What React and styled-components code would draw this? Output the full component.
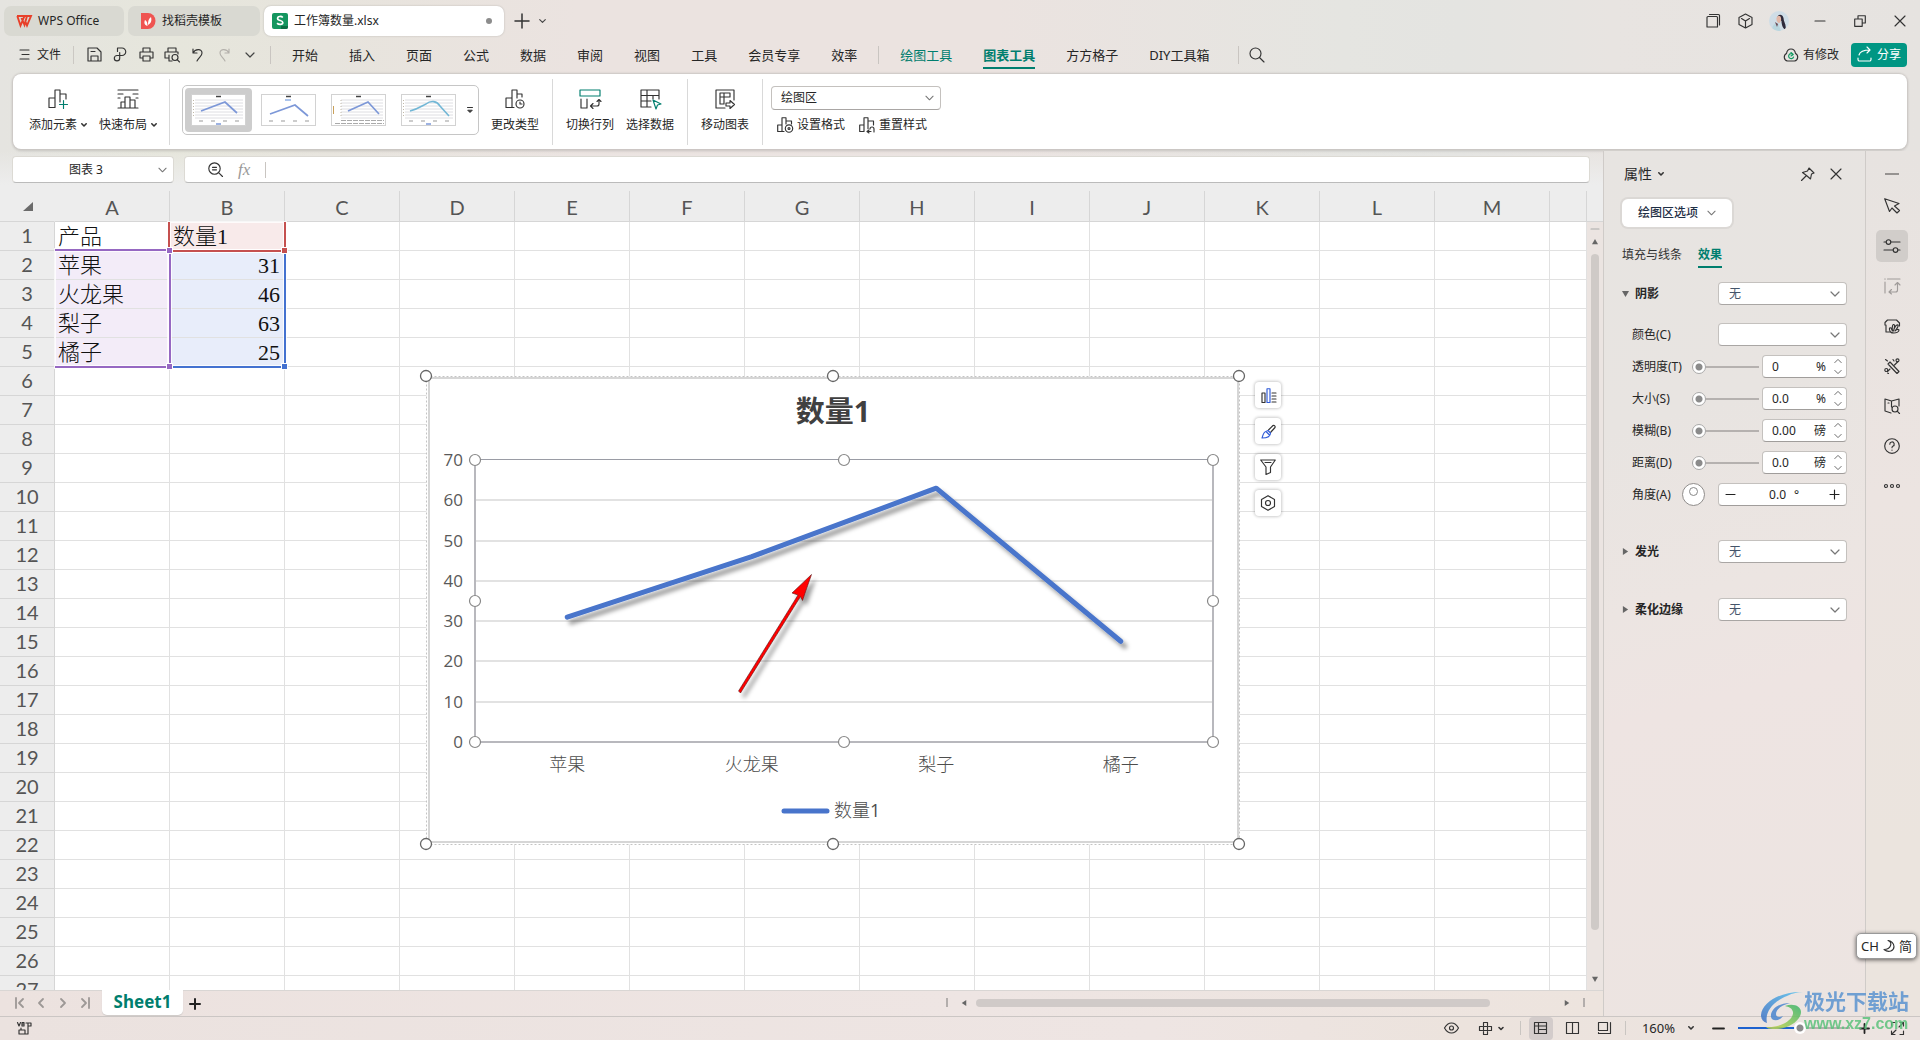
import React from "react";
import styled, { createGlobalStyle, css } from "styled-components";

const UI = `"Noto Sans", "Noto Sans CJK SC", sans-serif`;
const GREEN = "#007e6e";

const Global = createGlobalStyle`
  * { box-sizing: border-box; }
  html, body { margin: 0; height: 100%; overflow: hidden; }
  body { font: 12px/16px ${UI}; color: #262626; }
  button, input, select { font: inherit; color: inherit; margin: 0; padding: 0; border: 0; background: none; }
  svg { display: block; flex: none; overflow: visible; }
`;

/* ---------- icons ---------- */
const Svg = ({ w = 20, h, box, c = "#333", sw = 1.15, children }) => (
  <svg width={w} height={h || w} viewBox={box || `0 0 ${w} ${h || w}`} fill="none" stroke={c}
    strokeWidth={sw} strokeLinecap="round" strokeLinejoin="round" aria-hidden="true">{children}</svg>
);
const Chevron = ({ w = 10, c = "#777", sw = 1.2, up }) => (
  <Svg w={w} h={6} box="0 0 10 6" c={c} sw={sw}><path d={up ? "M1 5 5 1l4 4" : "M1 1l4 4 4-4"} /></Svg>
);
const Caret = () => <Svg w={6} h={4} c="#333" sw={1.6}><path d="M.8.8 3 3 5.2.8" /></Svg>;
const Tri = ({ d = "down", c = "#666", s = 8 }) => {
  const p = { down: "M0 1h8L4 8z", right: "M1 0v8l6-4z", left: "M7 0v8L1 4z", up: "M0 7h8L4 0z" }[d];
  return <svg width={s} height={s} viewBox="0 0 8 8" aria-hidden="true"><path d={p} fill={c} /></svg>;
};

/* ---------- frame ---------- */
const App_ = styled.div`
  height: 100vh; display: flex; flex-direction: column; position: relative;
  background: linear-gradient(90deg, #e5e4e0 0, #e6e6dc 9%, #e7e4dd 17%, #ebe3e0 30%, #ebe3e0 52%, #e5e5e1 70%, #e4e4e1 76%, #e8e4e1 84%, #e6e3e0 100%);
`;
const TitleBar = styled.header`
  display: flex; align-items: center; height: 37px; padding: 4px 7px 0 4px; gap: 4px; flex: none;
`;
const DocTab = styled.button`
  display: flex; align-items: center; gap: 6px; height: 30px; width: ${(p) => p.$w}px; padding: 0 12px;
  padding-left: ${(p) => (p.$on ? 8 : 12)}px;
  border-radius: 7px; background: ${(p) => (p.$on ? "#fff" : "#d9d9d2")};
  box-shadow: ${(p) => (p.$on ? "0 0 2px #b5b2ae" : "none")};
`;
const Dot = styled.i`width: 6px; height: 6px; border-radius: 50%; background: #8c8c8c; margin-left: auto;`;
const Spacer = styled.div`flex: ${(p) => (p.$w ? `0 0 ${p.$w}px` : 1)};`;
const IconBtn = styled.button`
  display: flex; align-items: center; justify-content: center; flex: none;
  width: ${(p) => p.$w || 26}px; height: ${(p) => p.$h || 26}px;
  border-radius: ${(p) => p.$r || 0}px; background: ${(p) => p.$bg || "none"};
`;
const Avatar = styled.span`
  width: 20px; height: 20px; border-radius: 50%; overflow: hidden; background: #cfdde6;
`;
const MenuBar = styled.nav`
  display: flex; align-items: center; height: 37px; padding: 0 13px 2px 16px; flex: none;
`;
const FileBtn = styled.button`
  display: flex; align-items: center; gap: 8px; height: 18px; padding: 0 12px 0 4px; border-right: 1px solid #cbc8c3;
`;
const Quick = styled.div`display: flex; padding: 0 7px 0 7px;`;
const Bar = styled.i`width: 1px; height: ${(p) => p.$h || 18}px; background: #c9c5c1; flex: none; margin: 0 ${(p) => p.$mr || 0}px 0 ${(p) => p.$ml || 0}px;`;
const Menus = styled.div`display: flex; align-items: center; gap: 31px; padding: 0 21px; font-size: 13px; line-height: 18px;`;
const MenuItem = styled.button`
  height: 28px; padding-top: 2px; border-bottom: 2px solid ${(p) => (p.$on ? GREEN : "transparent")};
  color: ${(p) => (p.$green ? GREEN : "#262626")}; font-weight: ${(p) => (p.$on ? 700 : 400)}; white-space: nowrap;
`;
const Changed = styled.span`display: flex; align-items: center; gap: 4px; margin-right: 12px;`;
const Share = styled.button`
  display: flex; align-items: center; gap: 5px; height: 24px; width: 56px; padding-left: 6px;
  background: #009683; color: #fff; border-radius: 4px; white-space: nowrap;
`;

/* ---------- ribbon ---------- */
const Ribbon = styled.section`
  display: flex; align-items: center; height: 75px; margin: 0 13px; flex: none; background: #fff;
  border-radius: 8px; box-shadow: 0 0 2px 1px #c9c5c2, 0 2px 3px rgba(0,0,0,.12);
`;
const Group = styled.div`
  display: flex; align-items: center; height: 66px; gap: 12px; padding: 0 ${(p) => p.$pr ?? 13}px 4px ${(p) => p.$pl ?? 13}px;
  border-right: ${(p) => (p.$last ? 0 : 1)}px solid #d9d9d9;
`;
const Tool = styled.button`
  display: flex; flex-direction: column; align-items: center; gap: 8px; white-space: nowrap; height: 46px; padding-top: 2px;
  & > span { display: flex; align-items: center; gap: 4px; }
`;
const Gallery = styled.div`
  display: flex; align-items: center; width: 297px; height: 50px; padding: 0 2px; gap: 3px;
  border: 1px solid #c6c6c6; border-radius: 5px;
`;
const Thumb = styled.button`
  width: 67px; height: 44px; padding: 6px; border-radius: 4px; background: ${(p) => (p.$on ? "#cdcdcd" : "#fff")};
`;
const Stack = styled.div`display: flex; flex-direction: column; gap: 6px;`;
const Row = styled.div`display: flex; align-items: center; gap: ${(p) => p.$g || 0}px;`;
const SmallTool = styled.button`display: flex; align-items: center; gap: 4px; height: 18px; white-space: nowrap; padding-left: 6px;`;

const SelectWrap = styled.span`
  position: relative; display: block; width: ${(p) => (p.$w ? p.$w + "px" : "100%")};
  & > svg { position: absolute; right: 7px; top: 50%; margin-top: -3px; pointer-events: none; }
`;
const Select = styled.select`
  appearance: none; display: block; width: 100%; height: ${(p) => p.$h || 23}px; padding: 0 24px 0 ${(p) => p.$pl || 10}px;
  background: #fff; border: 1px solid #c4c1be; border-radius: 4px; color: ${(p) => p.$c || "#262626"};
  border-bottom-color: #a9a6a4; ${(p) => p.$center && css`text-align: center; text-align-last: center; border-color: #dcdad4; border-bottom-color: #bbb;`}
`;

/* ---------- body ---------- */
const Body = styled.main`flex: 1; min-height: 0; display: flex; padding-top: 2px;`;
const Left = styled.div`flex: 1; min-width: 0; display: flex; flex-direction: column;`;
const FormulaRow = styled.div`
  display: flex; gap: 10px; height: 40px; padding: 5px 13px 8px 12px; flex: none;
  background: linear-gradient(180deg, rgba(237,237,237,0) 0, #ededed 85%);
`;
const FormulaBox = styled.label`
  display: flex; align-items: center; flex: 1; gap: 15px; padding-left: 23px; background: #fff; border-radius: 4px;
  border: 1px solid #dcdad4; border-bottom-color: #bbb; min-width: 0;
  & > input { flex: 1; outline: 0; min-width: 0; }
`;
const Fx = styled.i`font: italic 17px/20px "Liberation Serif", serif; color: #999;`;
const SheetRow = styled.div`flex: 1; min-height: 0; display: flex; background: #ededed;`;
const Sheet = styled.div`flex: 1; min-width: 0; position: relative; overflow: hidden; background: #fff;`;
const Grid = styled.table`
  table-layout: fixed; border-collapse: separate; border-spacing: 0; width: 100%; min-width: 1500px;
  th { background: #ededed; color: #555; font: 20px/24px Lato, sans-serif; padding: 0 0 2px; height: 29px; border-right: 1px solid #d6d6d6; border-bottom: 1px solid #d6d6d6; }
  thead th { height: 31px; padding: 1px 0 0; }
  thead th:first-child { border-right-color: #ededed; }
  td { height: 29px; padding: 2px 4px 0 3px; border-right: 1px solid #e1e1e1; border-bottom: 1px solid #e1e1e1; white-space: nowrap; overflow: hidden; }
`;
const Corner = styled.div`display: flex; justify-content: flex-end; padding-right: 21px;`;
const Cell = styled.td`
  font: 300 22px/26px "Liberation Serif", "Noto Sans CJK SC", serif; color: #111;
  text-align: ${(p) => (p.$num ? "right" : "left")};
  background: ${(p) => p.$bg || "#fff"};
`;
const Range = styled.div`
  position: absolute; left: ${(p) => p.$x}px; top: ${(p) => p.$y}px; width: ${(p) => p.$w}px; height: ${(p) => p.$h}px;
  border: 0 solid ${(p) => p.$c}; border-width: ${(p) => p.$b}; pointer-events: none;
  box-shadow: inset 0 0 0 1px rgba(255,255,255,.8), 0 0 0 1px rgba(255,255,255,.8);
`;
const Knob = styled.i`
  position: absolute; left: ${(p) => p.$x - 4}px; top: ${(p) => p.$y - 3}px; width: 7px; height: 7px;
  background: ${(p) => p.$c}; border: 1px solid #fff;
`;
const ChartLayer = styled.figure`position: absolute; left: 418px; top: 177px; margin: 0;`;
const ChartTools = styled.div`
  position: absolute; left: 1255px; top: 191px; display: flex; flex-direction: column; gap: 10px;
  button { background: #fff; border-radius: 4px; box-shadow: 0 0 3px 1px rgba(0,0,0,.2); }
`;
const VScroll = styled.div`
  width: 16px; flex: none; display: flex; flex-direction: column; align-items: center; gap: 9px;
  background: #ebe4e1; margin-top: 30px; padding: 6px 0 8px; border-top: 1px solid #d6d6d6;
  i { width: 8px; border-radius: 4px; background: #cfcac7; flex: 0 1 676px; margin-bottom: auto; }
`;
const TabRow = styled.div`
  display: flex; align-items: flex-start; height: 26px; flex: none; background: linear-gradient(90deg, #ece2df, #eee5e3 60%, #ede4de);
  border-top: 1px solid #d9d6d4; padding: 0 18px 0 8px;
`;
const TabNav = styled.div`display: flex; width: 94px; height: 23px; align-items: center;`;
const SheetTab = styled.button`
  height: 25px; margin-top: -1px; width: 81px; background: #fff; color: ${GREEN}; border-radius: 0 0 5px 5px; white-space: nowrap;
  font: 700 17px/22px "Noto Sans", sans-serif; padding-bottom: 2px; box-shadow: 0 1px 1px #cfcac8;
`;
const HScroll = styled.div`
  display: flex; align-items: center; flex: 0 0 639px; height: 23px; margin-left: auto;
  b { width: 514px; height: 8px; border-radius: 4px; background: #d0cac8; margin: 0 auto 0 9px; }
`;
const Tick = styled.i`width: 2px; height: 9px; background: #b3aeac; margin-right: ${(p) => p.$mr || 0}px; margin-left: ${(p) => p.$ml || 0}px;`;

/* ---------- properties panel ---------- */
const Panel = styled.aside`
  width: 262px; flex: none; border-left: 1px solid #cfcbc8; padding: 12px 18px 0 18px;
  background: linear-gradient(165deg, #e7e4e1 0, #e8e4e1 30%, #ece5e2 50%, #eee4e2 62%, #ece4e1 100%);
`;
const PanelHead = styled.div`display: flex; align-items: center; height: 22px; font-size: 14px; gap: 6px; padding-left: 2px;`;
const OptionBtn = styled.button`
  display: flex; align-items: center; justify-content: center; gap: 9px; width: 110px; height: 28px; margin-top: 14px;
  background: #fff; border-radius: 6px; font-weight: 500; color: #1f2f45; box-shadow: 0 0 0 2px #dbd8d5; white-space: nowrap;
`;
const PanelTabs = styled.div`display: flex; gap: 16px; margin: 17px 0 14px;`;
const PanelTab = styled.button`
  height: 24px; color: ${(p) => (p.$on ? GREEN : "#333")}; font-weight: ${(p) => (p.$on ? 700 : 400)};
  border-bottom: 2px solid ${(p) => (p.$on ? GREEN : "transparent")}; white-space: nowrap;
`;
const Section = styled.div`
  display: grid; grid-template-columns: 96px 1fr; align-items: center; margin-bottom: ${(p) => p.$mb}px; height: 23px;
`;
const SectionName = styled.label`display: flex; align-items: center; gap: 6px; font-weight: 700;`;
const Prop = styled.div`
  display: grid; grid-template-columns: 57px 67px 1fr; column-gap: 3px; align-items: center; height: 23px; margin-bottom: 9px; padding-left: 10px;
  label { white-space: nowrap; }
`;
const PropWide = styled(Prop)`grid-template-columns: 50px 23px 1fr; column-gap: 0; & > :nth-child(3) { margin-left: 13px; }`;
const ColorRow = styled(Section)`label { padding-left: 10px; }`;
const Slider = styled.input`
  appearance: none; width: 67px; height: 16px; background: linear-gradient(#b5b1af, #b5b1af) center / 100% 2px no-repeat;
  &::-webkit-slider-thumb { appearance: none; width: 14px; height: 14px; border-radius: 50%; background: radial-gradient(#8b8b8b 0 3px, #fff 4px); border: 1px solid #aaa; }
`;
const Spin = styled.div`
  display: flex; align-items: center; height: 23px; min-width: 0; background: #fff; border: 1px solid #c4c1be; border-bottom-color: #a09d9b; border-radius: 4px; padding: 0 4px 0 9px;
  input { flex: 1; width: 40px; min-width: 0; font-size: 12px; outline: 0; }
  > span { margin-right: 8px; }
  div { display: flex; flex-direction: column; gap: 1px; }
  div button { display: flex; width: 8px; height: 10px; align-items: center; justify-content: center; }
`;
const AngleBox = styled(Spin)`
  padding: 0 7px; input { flex: 0 0 51px; text-align: right; } > span { margin: 0; padding-left: 8px; flex: 1; }
`;
const Dial = styled.button`
  width: 23px; height: 23px; border-radius: 50%; background: #fff; border: 1px solid #8f8c8a; display: flex; justify-content: center; padding-top: 3px;
  i { width: 9px; height: 9px; border-radius: 50%; border: 1px solid #888; }
`;
const Rail = styled.aside`
  width: 55px; flex: none; border-left: 1px solid #cfcbc8; display: flex; flex-direction: column; align-items: center; gap: 8px; padding: 39px 2px 0 0;
  position: relative;
  background: linear-gradient(180deg, #e7e3e0, #ece4e1 40%, #ebe4de 80%);
  &::before { content: ""; position: absolute; top: 22px; width: 14px; height: 2px; background: #969391; }
`;

/* ---------- status bar ---------- */
const Status = styled.footer`
  display: flex; align-items: center; height: 24px; flex: none; border-top: 1px solid #cbc6c4; padding: 0 10px 1px 12px;
  background: linear-gradient(90deg, #ebe2df, #eee5e3 60%, #ece3dd 76%, #ece4e1);
`;
const Zoom = styled.button`display: flex; align-items: center; gap: 13px; height: 22px; padding: 0 12px 0 16px; font-size: 13px;`;
const ZoomSlider = styled.input`
  appearance: none; width: 112px; height: 14px; margin: 0 8px;
  background: linear-gradient(90deg, #1d62cf 0 56%, #b5b0ae 56%) center / 100% 2px no-repeat;
  &::-webkit-slider-thumb { appearance: none; width: 12px; height: 12px; border-radius: 50%; background: radial-gradient(#8b8b8b 0 3px, #fff 4px); }
`;
const Ime = styled.div`
  position: absolute; right: 3px; bottom: 81px; width: 61px; height: 26px; background: #fff; border: 1px solid #999; border-radius: 5px;
  display: flex; align-items: center; justify-content: center; gap: 4px; font-size: 13px; box-shadow: 0 1px 4px rgba(0,0,0,.6);
`;
const Watermark = styled.div`
  position: absolute; right: 11px; bottom: 7px; display: flex; align-items: center; gap: 1px; pointer-events: none; opacity: .85;
`;
const WmText = styled.div`
  display: flex; flex-direction: column; font-family: "Noto Sans CJK SC", sans-serif;
  b { font-size: 21px; line-height: 25px; margin-bottom: 2px; color: #5b93d0; white-space: nowrap; }
  span { font: 700 16px/18px "Liberation Sans", sans-serif; color: #5cc27c; white-space: nowrap; }
`;

/* ---------- data ---------- */
const DATA = [["苹果", 31], ["火龙果", 46], ["梨子", 63], ["橘子", 25]];
const COLS = "ABCDEFGHIJKLM".split("");
const MENUS = ["开始", "插入", "页面", "公式", "数据", "审阅", "视图", "工具", "会员专享", "效率"];

function Miniature({ kind }) {
  const curve = kind === 3;
  return (
    <svg width="55" height="32" viewBox="0 0 55 32" aria-hidden="true">
      <rect x=".5" y=".5" width="54" height="31" fill="#fff" stroke="#d2d2d2" />
      <path d="M25 2.5h5" stroke="#444" strokeWidth="1.5" />
      {kind !== 1 && [6, 9, 12, 15, 18, 21, 24].map((y) => <path key={y} d={`M${kind === 2 ? 10 : 4} ${y}H52`} stroke="#dedee2" />)}
      {kind !== 1 && <path d={`M${kind === 2 ? 10 : 2.5} 6v18`} stroke="#c0b8a8" strokeDasharray="1 2" />}
      {kind === 1 && <path d="M24 6h6" stroke="#8fb0e6" strokeWidth="1.5" />}
      {kind === 2 && <><path d="M2.5 12v8" stroke="#caa15a" /><path d="M10 26.5h43M4 29.5h49" stroke="#aaa" strokeDasharray="5 1" /></>}
      {curve
        ? <path d="M9 17c8-2 12-5 16-7 5-4 11-3 14 2l9 10" fill="none" stroke="#72b7d6" strokeWidth="1.6" />
        : <path d={kind === 1 ? "M9 20 34 11 47 22" : kind === 2 ? "M17 17 37 8 48 20" : "M10 17 34 8 46 19"} fill="none" stroke="#7d98d8" strokeWidth="1.7" />}
      {kind !== 2 && <path d="M8 27h4m8 0h4m8 0h4m8 0h4" stroke="#999" />}
      {kind !== 1 && kind !== 2 && <path d="M25 30h5" stroke="#7d98d8" strokeWidth="1.5" />}
    </svg>
  );
}

function Chart() {
  const x0 = 475, x1 = 1213, y0 = 742, y1 = 460;
  const py = (v) => y0 - (v * (y0 - y1)) / 70;
  const px = (i) => x0 + ((i + 0.5) * (x1 - x0)) / 4;
  const pts = DATA.map((d, i) => `${px(i)},${py(d[1])}`).join(" ");
  const xs = [426, 833, 1239], ys = [376, 844];
  const cjk = `"Noto Sans CJK SC", sans-serif`;
  return (
    <svg width="832" height="486" viewBox="418 368 832 486" role="img" aria-label="数量1">
      <defs>
        <filter id="soft" x="-10%" y="-10%" width="120%" height="130%"><feDropShadow dx="4" dy="5" stdDeviation="2" floodColor="#000" floodOpacity=".38" /></filter>
      </defs>
      <rect x="426.5" y="376.5" width="813" height="468" fill="#fff" stroke="#c4c4c4" strokeDasharray="2 2" />
      <rect x="429" y="378" width="809" height="464" fill="#fff" stroke="#d6d6d6" strokeWidth="2" />
      <text x="833" y="422" textAnchor="middle" fontFamily={`"Open Sans", ${cjk}`} fontSize="29" fontWeight="700" fill="#404040">数量1</text>
      {[0, 10, 20, 30, 40, 50, 60, 70].map((v) => (
        <g key={v}>
          {v > 0 && v < 70 && <path d={`M${x0} ${Math.round(py(v))}H${x1}`} stroke="#e2e2e2" strokeWidth="2" />}
          <text x="463" y={Math.round(py(v)) + 6} textAnchor="end" fontFamily={`"Open Sans", sans-serif`} fontSize="17" fill="#595959">{v}</text>
        </g>
      ))}
      <path d={`M${x0} ${y1}V${y0}H${x1}V${y1}`} fill="none" stroke="#b8b8bd" strokeWidth="2" />
      <path d={`M${x0} ${y1 - 0.5}H${x1}`} stroke="#9a9ca5" />
      <g filter="url(#soft)"><polyline points={pts} fill="none" stroke="#4874cb" strokeWidth="5" strokeLinecap="round" strokeLinejoin="round" /></g>
      <g filter="url(#soft)"><path d="M738.5 691 798 595 792 593 811.5 574.5 802.5 600.5 800.5 596.5 740.5 693z" fill="#ff0000" stroke="#5a1a1a" strokeWidth=".6" /></g>
      {DATA.map((d, i) => (
        <text key={d[0]} x={px(i)} y="771" textAnchor="middle" fontFamily={cjk} fontWeight="300" fontSize="18" fill="#4d4d4d">{d[0]}</text>
      ))}
      <path d="M784 811h43" stroke="#4874cb" strokeWidth="5" strokeLinecap="round" />
      <text x="834" y="817" fontFamily={`"Open Sans", ${cjk}`} fontWeight="300" fontSize="18" fill="#4d4d4d">数量<tspan fontWeight="400">1</tspan></text>
      <g fill="#fff" stroke="#666" strokeWidth="1.3">
        {xs.flatMap((x) => ys.map((y) => <circle key={`${x}-${y}`} cx={x} cy={y} r="5.5" />))}
      </g>
      <g fill="#fff" stroke="#888" strokeWidth="1.2">
        {[x0, 844, x1].flatMap((x) => [y1, 601, y0].filter((y) => !(x === 844 && y === 601)).map((y) => <circle key={`${x}-${y}`} cx={x} cy={y} r="5.5" />))}
      </g>
    </svg>
  );
}

function SpinRow({ id, label, value, unit }) {
  return (
    <Prop>
      <label htmlFor={id}>{label}</label>
      <Slider type="range" defaultValue="0" aria-label={label} />
      <Spin>
        <input id={id} defaultValue={value} />
        <span>{unit}</span>
        <div>
          <button aria-label="增加"><Chevron w={8} c="#666" up /></button>
          <button aria-label="减少"><Chevron w={8} c="#666" /></button>
        </div>
      </Spin>
    </Prop>
  );
}

function EffectSection({ id, name, open, mb }) {
  return (
    <Section $mb={mb}>
      <SectionName htmlFor={id}><Tri s={7} d={open ? "down" : "right"} />{name}</SectionName>
      <SelectWrap><Select id={id} $c="#44546a"><option>无</option></Select><Chevron /></SelectWrap>
    </Section>
  );
}

export default function App() {
  return (
    <App_>
      <Global />
      <TitleBar>
        <DocTab $w={120}>
          <svg width="16" height="12" viewBox="0 0 16 12" fill="none" aria-hidden="true"><path d="M1 1h10l-2.5 9L5.500 3M1.300 1l3.200 9.500L8.500 1M11 1h4l-4 9.500-2-5" stroke="#e8402a" strokeWidth="1.9" /></svg>
          WPS Office
        </DocTab>
        <DocTab $w={132}>
          <svg width="16" height="16" viewBox="0 0 16 16" aria-hidden="true"><path d="M1 0h7a7.500 8 0 0 1 0 16H1z" fill="#ef5451" /><path d="M7.500 13C4 12 4 9 5 7c2 1 2.500 3 2.500 6zM8 12c0-4 .5-6 3-8 1 4 0 6-3 8z" fill="#fff" /></svg>
          找稻壳模板
        </DocTab>
        <DocTab $w={240} $on>
          <svg width="16" height="16" viewBox="0 0 16 16" aria-hidden="true"><rect width="16" height="16" rx="2" fill="#14965f" /><path d="M9 16h5a2 2 0 0 0 2-2v-1H9z" fill="#0b6e43" /><path d="M10.800 4.500C9.500 3 5.600 3 5.600 5.400c0 2.600 5.200 1.500 5.200 4 0 2.600-4.300 2.400-5.700.7" fill="none" stroke="#fff" strokeWidth="1.7" /></svg>
          工作簿数量.xlsx
          <Dot />
        </DocTab>
        <Row>
          <IconBtn $w={28} aria-label="新建标签"><Svg w={14} c="#333" sw={1.5}><path d="M7 0v14M0 7h14" /></Svg></IconBtn>
          <IconBtn $w={12} aria-label="标签列表"><Chevron w={7} c="#444" sw={1.6} /></IconBtn>
        </Row>
        <Spacer />
        <Row $g={13}>
          <Row $g={6}>
            <IconBtn aria-label="窗口列表"><Svg w={14}><path d="M1 3.500A1 1 0 0 1 2 2.500h8.500a1 1 0 0 1 1 1V13H1zM3.500.5h9a1 1 0 0 1 1 1v9.500" /></Svg></IconBtn>
            <IconBtn aria-label="应用"><Svg w={15} h={16}><path d="M7.500 1 14 4.500v7L7.500 15 1 11.500v-7zM3.500 5.500l4 2.500 4-2.500M7.500 8v7" /></Svg></IconBtn>
            <IconBtn $w={30} aria-label="账号"><Avatar><svg width="20" height="20" viewBox="0 0 20 20" aria-hidden="true"><path d="M3 20c0-5 2-8 6-8l3 8z" fill="#b9d6de" /><path d="M8.500 6c1-3 5-3 6 1 0 4 3 6 2 11-2 1-4-4-4-8z" fill="#2e2a3a" /><path d="M7.500 7c1-3 4-3 4.500 0s-1 5-2 5-3-2-2.500-5z" fill="#e2b7a6" /><path d="M6 11l3 2-1 3z" fill="#6b4b55" /></svg></Avatar></IconBtn>
          </Row>
          <Row $g={14}>
            <IconBtn aria-label="最小化"><Svg w={10}><path d="M0 5h10" /></Svg></IconBtn>
            <IconBtn aria-label="还原"><Svg w={12}><path d="M.7 4h7.500v7.300H.7zM4 4V.7h7.300v7.300H8.200" /></Svg></IconBtn>
            <IconBtn aria-label="关闭"><Svg w={10}><path d="M0 0l10 10M10 0 0 10" /></Svg></IconBtn>
          </Row>
        </Row>
      </TitleBar>

      <MenuBar>
        <FileBtn><Svg w={9} h={11}><path d="M0 1h9M2 5.500h7M0 10h9" /></Svg>文件</FileBtn>
        <Quick>
          <IconBtn aria-label="保存"><Svg w={15}><path d="M1 1h9l4 4v9H1zM4 14V9h7v5M4 4.500h4" /></Svg></IconBtn>
          <IconBtn aria-label="输出"><Svg w={14} h={15}><path d="M4.500 4.500V1H9a3.700 3.700 0 1 1 0 7.500H4a2.700 2.700 0 1 0 2.700 2.700V5.500" /></Svg></IconBtn>
          <IconBtn aria-label="打印"><Svg w={15}><path d="M4 5V1h7v4M4 11H1V5h13v6h-3M4 9h7v5H4z" /></Svg></IconBtn>
          <IconBtn aria-label="打印预览"><Svg w={16} h={15}><path d="M4 5V1h8v4M5 11H1V5h13v2M5 8v6h3" /><circle cx="11" cy="10.500" r="3" /><path d="M13.200 12.700 15.500 15" /></Svg></IconBtn>
          <IconBtn aria-label="撤销"><Svg w={12} h={14}><path d="M1 1v4h4M1 5c2-4 9-5 9 0 0 3-3 4-5 8" /></Svg></IconBtn>
          <IconBtn aria-label="恢复"><Svg w={12} h={14} c="#b3b0ab"><path d="M11 1v4H7M11 5C9 1 2 0 2 5c0 3 3 4 5 8" /></Svg></IconBtn>
          <IconBtn aria-label="更多"><Chevron c="#444" /></IconBtn>
        </Quick>
        <Bar />
        <Menus>
          {MENUS.map((m) => <MenuItem key={m}>{m}</MenuItem>)}
        </Menus>
        <Bar />
        <Menus>
          <MenuItem $green>绘图工具</MenuItem>
          <MenuItem $green $on>图表工具</MenuItem>
          <MenuItem>方方格子</MenuItem>
          <MenuItem>DIY工具箱</MenuItem>
        </Menus>
        <Bar $ml={8} />
        <IconBtn $w={36} aria-label="搜索"><Svg w={16}><circle cx="6.500" cy="6.500" r="5.500" /><path d="M10.500 10.500 15 15" /></Svg></IconBtn>
        <Spacer />
        <Changed><Svg w={16} h={14}><path d="M4.500 13a4 4 0 0 1-1-7.500C4 2.500 6 1 8 1s4 1.500 4.500 4.500a4 4 0 0 1-1 7.500z" /><path d="M10 6.500A2.500 2.500 0 1 0 10.500 9M8 4.500l2.200 2L8 8" stroke="#109a62" /></Svg>有修改</Changed>
        <Share><Svg w={15} h={15} c="#fff"><path d="M1 11v1.500A1.500 1.500 0 0 0 2.500 14h10a1.500 1.500 0 0 0 1.500-1.500V11M2 8c1-4 5-5 11-5M10 0l3 3-3 3" /></Svg>分享</Share>
      </MenuBar>

      <Ribbon>
        <Group $pl={16} $pr={12}>
          <Tool><Svg w={20}><path d="M1 18.500V9h6v9.500zM7 9V1h5v12M12 5h6v5" /><path d="M15.500 11.500v8M11.500 15.500h8" stroke={GREEN} /></Svg><span>添加元素<Caret /></span></Tool>
          <Tool><Svg w={20}><path d="M0 1h20M0 5h5M15 5h5M0 9h2M18 9h2M0 19h20M3 19v-6h4v6M7 13V8h5v11M12 11h5v8" /></Svg><span>快速布局<Caret /></span></Tool>
        </Group>
        <Group $pl={12}>
          <Gallery>
            {[0, 1, 2, 3].map((k) => <Thumb key={k} $on={k === 0} aria-label={`图表样式${k + 1}`}><Miniature kind={k} /></Thumb>)}
            <IconBtn $w={9} aria-label="更多样式"><Svg w={6} h={6} sw={1}><path d="M.5.5h5" /><path d="M1 3.500 3 5.500 5 3.500z" fill="#333" /></Svg></IconBtn>
          </Gallery>
          <Tool><Svg w={20}><path d="M1 18.500V9h6v9.500zM7 9V1h5v8M12 5h5v3M7 18.500h2" /><circle cx="15" cy="15" r="4" /><path d="M15 13v2h2" /></Svg><span>更改类型</span></Tool>
        </Group>
        <Group>
          <Tool><Svg w={20}><path d="M0 1h20v6H0z" stroke={GREEN} /><path d="M1 10v9h6v-9M11 17h6a2 2 0 0 0 2-2v-4M13 14.500 10.500 17l2.500 2.500M17 12.500l2-2 2 2" /></Svg><span>切换行列</span></Tool>
          <Tool><Svg w={20}><path d="M1 1h18v9M1 1v17h10M1 6.500h18M1 12h10M7 1v17M13 6.500V10" /><path d="M13 11l8 4-3.500 1L16 20z" stroke={GREEN} /></Svg><span>选择数据</span></Tool>
        </Group>
        <Group>
          <Tool><Svg w={20}><path d="M19 11V1H1v18h9M5 4h10v4H9v7H5zM5 8h4M9 4v4M11 14h4v-2.500l4.500 4-4.500 4V17h-4z" /></Svg><span>移动图表</span></Tool>
        </Group>
        <Group $last $pl={8}>
          <Stack>
            <SelectWrap $w={170}><Select $h={24} $pl={9} aria-label="图表元素"><option>绘图区</option></Select><Chevron w={9} /></SelectWrap>
            <Row $g={8}>
              <SmallTool><Svg w={16}><path d="M.7 14.500V8H5v6.500zM5 8V.7h4V7M9 4h5.500v3M5 14.500h2" /><circle cx="12" cy="11.500" r="3.700" /><circle cx="12" cy="11.500" r="1" /></Svg>设置格式</SmallTool>
              <SmallTool><Svg w={16}><path d="M.7 14.500V8H5v6.500zM5 8V.7h4v11M9 4h5.500v4M8 14.500h4M10 13l-2 1.500 2 1.500M15 15v-3a2 2 0 0 0-4 0" /></Svg>重置样式</SmallTool>
            </Row>
          </Stack>
        </Group>
      </Ribbon>

      <Body>
        <Left>
          <FormulaRow>
            <SelectWrap $w={162}><Select $h={27} $center aria-label="名称框"><option>图表 3</option></Select><Chevron w={9} /></SelectWrap>
            <FormulaBox>
              <Svg w={15}><circle cx="6.500" cy="6.500" r="5.700" /><path d="M4.500 5.300h4M4.500 7.800h4M10.800 10.800 14.500 14.500" /></Svg>
              <Fx>fx</Fx>
              <Bar $h={16} />
              <input aria-label="编辑栏" />
            </FormulaBox>
          </FormulaRow>
          <SheetRow>
            <Sheet>
              <Grid>
                <colgroup>
                  <col width="55" />
                  {COLS.map((c) => <col key={c} width="115" />)}
                  <col />
                </colgroup>
                <thead>
                  <tr>
                    <th><Corner><svg width="10" height="9" viewBox="0 0 10 9" aria-hidden="true"><path d="M10 0v9H0z" fill="#6b6b6b" /></svg></Corner></th>
                    {COLS.map((c) => <th key={c}>{c}</th>)}
                    <th />
                  </tr>
                </thead>
                <tbody>
                  {Array.from({ length: 27 }, (_, r) => {
                    const rec = r === 0 ? ["产品", "数量1"] : DATA[r - 1] || ["", ""];
                    const hot = r > 0 && r < 5;
                    return (
                      <tr key={r}>
                        <th>{r + 1}</th>
                        <Cell $bg={hot && "#f3ecf8"}>{rec[0]}</Cell>
                        <Cell $num={hot} $bg={hot ? "#e8edfa" : r === 0 && "#f8eaea"}>{rec[1]}</Cell>
                        {Array.from({ length: 12 }, (_, c) => <td key={c} />)}
                      </tr>
                    );
                  })}
                </tbody>
              </Grid>
              <Range $x={168} $y={31} $w={118} $h={30} $c="#c5504f" $b="0 2px 2px 2px" />
              <Range $x={168} $y={60} $w={118} $h={117} $c="#4472d0" $b="0 2px 2px 0" />
              <Range $x={55} $y={58} $w={116} $h={119} $c="#9668c2" $b="2px 2px 2px 0" />
              <Range $x={171} $y={59} $w={113} $h={2} $c="#c5504f" $b="2px 0 0 0" />
              <Knob $x={170} $y={59} $c="#9668c2" /><Knob $x={170} $y={175} $c="#9668c2" />
              <Knob $x={285} $y={59} $c="#c5504f" /><Knob $x={285} $y={175} $c="#4472d0" />
              <ChartLayer><Chart /></ChartLayer>
              <ChartTools>
                <IconBtn aria-label="图表元素"><Svg w={15}><path d="M1 5h3v9.500H1z" /><path d="M6 .7h3v13.800H6z" stroke="#2f5bd8" /><path d="M11 5h4M11 8h4M11 11h4M11 14h4" /></Svg></IconBtn>
                <IconBtn aria-label="图表样式"><Svg w={15}><path d="M7.500 6 12 1.500a1.500 1.500 0 0 1 2 2L9.500 8.500" /><path d="M7 6.500 9.500 9c0 3-3 5-8.500 5C2 12 2 8 5 7.500zM5 7.500 8 10.500" stroke="#2f5bd8" /></Svg></IconBtn>
                <IconBtn aria-label="图表筛选器"><Svg w={16}><path d="M.7 1h14.600L10.500 8v5.500L6 15.500V8zM5 3.500h6" /></Svg></IconBtn>
                <IconBtn aria-label="设置"><Svg w={16}><path d="M8 .7 14.500 4.500v7L8 15.300 1.500 11.500v-7z" /><circle cx="8" cy="8" r="2.500" /></Svg></IconBtn>
              </ChartTools>
            </Sheet>
            <VScroll><Svg w={8} h={2} c="#aaa"><path d="M0 1h8" /></Svg><Tri d="up" s={6} /><i /><Tri s={6} /></VScroll>
          </SheetRow>
          <TabRow>
            <TabNav>
              <IconBtn $w={22} $h={22} aria-label="首个"><Svg w={9} h={10} c="#9d9896" sw={1.8}><path d="M1 0v10M8 1 4 5l4 4" /></Svg></IconBtn>
              <IconBtn $w={22} $h={22} aria-label="上一个"><Svg w={6} h={10} c="#9d9896" sw={1.8}><path d="M5 1 1 5l4 4" /></Svg></IconBtn>
              <IconBtn $w={22} $h={22} aria-label="下一个"><Svg w={6} h={10} c="#9d9896" sw={1.8}><path d="M1 1l4 4-4 4" /></Svg></IconBtn>
              <IconBtn $w={22} $h={22} aria-label="末个"><Svg w={9} h={10} c="#9d9896" sw={1.8}><path d="M1 1l4 4-4 4M8 0v10" /></Svg></IconBtn>
            </TabNav>
            <SheetTab>Sheet1</SheetTab>
            <IconBtn $w={24} aria-label="新建工作表"><Svg w={10} c="#222" sw={2}><path d="M5 0v10M0 5h10" /></Svg></IconBtn>
            <HScroll><Tick $mr={13} /><Tri d="left" s={6} /><b /><Tri d="right" s={6} /><Tick $ml={13} /></HScroll>
          </TabRow>
        </Left>

        <Panel>
          <PanelHead>
            属性<Caret /><Spacer />
            <IconBtn $w={22} $h={22} aria-label="固定"><Svg w={14}><path d="M8 1l5 5-2.500 1L9.500 12 5.500 8.500 1.500 5.500 6.500 4zM5 9l-4.500 4.500" /></Svg></IconBtn>
            <IconBtn $w={22} $h={22} aria-label="关闭面板"><Svg w={10}><path d="M0 0l10 10M10 0 0 10" /></Svg></IconBtn>
          </PanelHead>
          <OptionBtn>绘图区选项<Chevron w={9} /></OptionBtn>
          <PanelTabs><PanelTab>填充与线条</PanelTab><PanelTab $on>效果</PanelTab></PanelTabs>
          <EffectSection id="shadow" name="阴影" open mb={18} />
          <ColorRow $mb={9}>
            <label htmlFor="color">颜色(C)</label>
            <SelectWrap><Select id="color"><option></option></Select><Chevron /></SelectWrap>
          </ColorRow>
          <SpinRow id="alpha" label="透明度(T)" value="0" unit="%" />
          <SpinRow id="size" label="大小(S)" value="0.0" unit="%" />
          <SpinRow id="blur" label="模糊(B)" value="0.00" unit="磅" />
          <SpinRow id="dist" label="距离(D)" value="0.0" unit="磅" />
          <PropWide>
            <label htmlFor="angle">角度(A)</label>
            <Dial aria-label="角度盘"><i /></Dial>
            <AngleBox>
              <button aria-label="减小角度"><Svg w={9} c="#222"><path d="M0 4.500h9" /></Svg></button>
              <input id="angle" defaultValue="0.0" /><span>°</span>
              <button aria-label="增大角度"><Svg w={9} c="#222"><path d="M0 4.500h9M4.500 0v9" /></Svg></button>
            </AngleBox>
          </PropWide>
          <Section $mb={2} aria-hidden="true" />
          <EffectSection id="glow" name="发光" mb={35} />
          <EffectSection id="soften" name="柔化边缘" mb={0} />
        </Panel>

        <Rail>
          <IconBtn $w={32} $h={32} aria-label="选择"><Svg w={16}><path d="M.7.7 15 5.500 10.500 8l5 4.500-2.500 2.500-5-5-2.500 3.500z" /></Svg></IconBtn>
          <IconBtn $w={32} $h={32} $r={5} $bg="#d1cdca" aria-label="属性"><Svg w={16} h={14}><circle cx="4.500" cy="3" r="2.300" /><path d="M0 3h2M7 3h9M0 11h9M14 11h2" /><circle cx="11.500" cy="11" r="2.300" /></Svg></IconBtn>
          <IconBtn $w={32} $h={32} aria-label="转换"><Svg w={16} c="#a09c9a"><path d="M3.500 1H16M1 4v11M1 .8v.4M5 14h6.500a2 2 0 0 0 2-2V4.500M7.500 11.500 5 14l2.500 2M11 7l2.500-2.500L16 7" /></Svg></IconBtn>
          <IconBtn $w={32} $h={32} aria-label="图案"><Svg w={16} h={15}><path d="M1 6V3.500L3.500 1h9L15.500 4v3M2 6v7h4M6.500 13c-2-3-1-5 .5-4l1.500 3c-1-4 .5-8 2-6 .5 2-.5 4-1 6 1-4 3-7 4.500-6 1 2-2 4-3 6 1-1 3-2 4-1 0 2-3 3-5 3-1.500 0-2.500 0-3.500-1z" /></Svg></IconBtn>
          <IconBtn $w={32} $h={32} aria-label="工具"><Svg w={16}><path d="M3.500 3 1.500 1.500M6 4l9 9.500-2 2L4 6zM14 3.500 10.500 7M6 11l-2.500 2.500" /><circle cx="13.500" cy="2.300" r="1.500" /><circle cx="2.300" cy="12" r="1.500" /><path d="M9 1.500 10 3M3.500 15l1 .5" /></Svg></IconBtn>
          <IconBtn $w={32} $h={32} aria-label="查找资料"><Svg w={16}><path d="M7.500 3 1 1v12l6 2M7.500 3v6M7.500 3 15 1v7M4 5h1" /><circle cx="11" cy="11" r="3" /><path d="M13.200 13.200 15.500 15.500" /></Svg></IconBtn>
          <IconBtn $w={32} $h={32} aria-label="帮助"><Svg w={16}><circle cx="8" cy="8" r="7.300" /><path d="M5.800 6.200A2.200 2.200 0 1 1 8.800 8.200C8.200 8.500 8 9 8 9.700M8 12v.2" /></Svg></IconBtn>
          <IconBtn $w={32} $h={32} aria-label="更多"><Svg w={16} h={4}><circle cx="2" cy="2" r="1.500" /><circle cx="8" cy="2" r="1.500" /><circle cx="14" cy="2" r="1.500" /></Svg></IconBtn>
        </Rail>
      </Body>

      <Status>
        <IconBtn $w={24} $h={22} aria-label="宏"><Svg w={15} h={13}><path d="M.5.5 2 4 3.500.5M5 .5v3.500h2v-3.500zM5 2h2M9 1h5v3h-2.500M11 1v11H2V8h6v4M4 8V6" /></Svg></IconBtn>
        <Spacer />
        <IconBtn $w={36} $h={22} aria-label="护眼模式"><Svg w={15} h={12}><path d="M.5 6C3 1.500 5.500 1 7.500 1s4.500.5 7 5c-2.500 4.500-5 5-7 5s-4.500-.5-7-5z" /><circle cx="7.500" cy="6" r="2" /></Svg></IconBtn>
        <IconBtn $w={42} $h={22} aria-label="阅读模式"><Svg w={24} h={13}><path d="M4.500 3.500v-3h4v3M4.500 9.500v3h4v-3M3.500 4.500h-3v4h3M9.500 4.500h3v4h-3M4.500 4.500h4v4h-4z" /><path d="M20 5.500l2 2 2-2" strokeWidth="1.6" /></Svg></IconBtn>
        <Bar $ml={8} $mr={8} $h={14} />
        <IconBtn $w={24} $h={23} $r={4} $bg="#d3cccb" aria-label="普通视图"><Svg w={13} h={12}><path d="M.5.5h12v11H.5zM.5 4h12M4.500.5v11M4.500 7.500h8" /></Svg></IconBtn>
        <IconBtn $w={40} $h={22} aria-label="分页预览"><Svg w={13} h={12}><path d="M.5.5h12v11H.5zM6.500.5v11" /></Svg></IconBtn>
        <IconBtn $w={24} $h={22} aria-label="页面布局"><Svg w={13} h={12}><path d="M.5.5h9v8h-9zM12.500.5v11H.5v-1" /></Svg></IconBtn>
        <Bar $ml={8} $h={14} />
        <Zoom>160%<Caret /></Zoom>
        <IconBtn $w={24} $h={22} aria-label="缩小"><Svg w={11} c="#222" sw={1.8}><path d="M0 5.500h11" /></Svg></IconBtn>
        <ZoomSlider type="range" defaultValue="56" aria-label="缩放比例" />
        <IconBtn $w={12} $h={22} aria-label="放大"><Svg w={9} c="#222" sw={1.8}><path d="M4.500 0v9M0 4.500h9" /></Svg></IconBtn>
        <Spacer $w={14} />
        <IconBtn $h={22} aria-label="全屏"><Svg w={13} h={13}><path d="M.5 4V.5H4M9 .5h3.500V4M12.500 9v3.500H9M4 12.500H.5V9M8 5l4-4M5 8l-4 4" /></Svg></IconBtn>
      </Status>

      <Ime>CH<Svg w={12} h={12}><path d="M5 .5c5 2 3 9-4 9 5 4 10 1 10-3 0-3-3-6-6-6z" /></Svg>简</Ime>
      <Watermark>
        <svg width="43" height="40" viewBox="0 0 43 40" aria-hidden="true">
          <defs>
            <linearGradient id="wa" x1="0" y1="1" x2="1" y2="0"><stop offset="0" stopColor="#3d6fc4" /><stop offset="1" stopColor="#56c2ef" /></linearGradient>
            <linearGradient id="wb" x1="0" y1="1" x2="1" y2="0"><stop offset="0" stopColor="#d3d94a" /><stop offset="1" stopColor="#34b36a" /></linearGradient>
          </defs>
          <path d="M43 1C20 0 2 12 1 24c0 4 2 7 6 8-2-9 3-20 20-27C33 2 38 1 43 1z" fill="url(#wa)" />
          <path d="M30 12c-12 0-20 7-19 14 1 5 9 4 12-1-4 2-7 1-7-2 0-5 6-9 14-11z" fill="#4a86cf" />
          <path d="M25 15c8-3 16 0 16 6 0 9-14 18-28 17-4 0-6-1-7-2 16 1 28-8 27-15-1-4-4-5-8-6z" fill="url(#wb)" />
        </svg>
        <WmText><b>极光下载站</b><span>www.xz7.com</span></WmText>
      </Watermark>
    </App_>
  );
}
